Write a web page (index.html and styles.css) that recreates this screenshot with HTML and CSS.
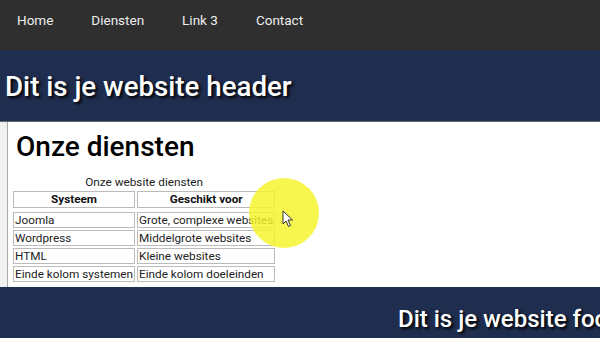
FILE: index.html
```html
<!DOCTYPE html>
<html lang="nl">
<head>
    <meta charset="UTF-8">
    <meta name="viewport" content="width=device-width, initial-scale=1.0">
    <title>Onze diensten</title>
    <link rel="stylesheet" href="styles.css">
</head>
<body>
    <nav class="topnav">
        <a href="#">Home</a>
        <a href="#">Diensten</a>
        <a href="#">Link 3</a>
        <a href="#">Contact</a>
    </nav>
    <header class="site-header">
        <h1>Dit is je website header</h1>
    </header>
    <div class="page">
        <aside class="sidebar"></aside>
        <main class="content">
            <h2>Onze diensten</h2>
            <table class="services">
                <caption>Onze website diensten</caption>
                <thead>
                    <tr><th>Systeem</th><th>Geschikt voor</th></tr>
                </thead>
                <tbody>
                    <tr><td>Joomla</td><td>Grote, complexe websites</td></tr>
                    <tr><td>Wordpress</td><td>Middelgrote websites</td></tr>
                    <tr><td>HTML</td><td>Kleine websites</td></tr>
                    <tr><td>Einde kolom systemen</td><td>Einde kolom doeleinden</td></tr>
                </tbody>
            </table>
        </main>
    </div>
    <footer class="site-footer">
        <p>Dit is je website footer</p>
    </footer>

    <!-- cursor highlight from the screen recording -->
    <div class="cursor-spot"></div>
    <svg class="cursor" width="12" height="18" viewBox="0 0 12 18">
        <path d="M1 1 L1 14 L4 11 L6.5 16.5 L8.5 15.5 L6 10 L10.5 10 Z" fill="#fff" stroke="#333" stroke-width="1"/>
    </svg>
</body>
</html>
```

FILE: styles.css
```css
body {
    margin: 0;
    font-family: Roboto, "Liberation Sans", Arial, sans-serif;
    background: #fff;
    overflow: hidden;
}
.topnav {
    display: flex;
    background-color: #2f2f2f;
    height: 50px;
    align-items: center;
    padding-left: 17px;
    padding-bottom: 10px;
    box-sizing: border-box;
}
.topnav a {
    color: #eee;
    text-decoration: none;
    font-size: 13.5px;
    margin-right: 38px;
}
.site-header {
    background-color: #1f2d4e;
    height: 71px;
    display: flex;
    align-items: center;
    border-bottom: 1px solid #666;
}
.site-header h1 {
    margin: 2px 0 0 5px;
    color: #fff;
    font-size: 27.7px;
    font-weight: 500;
    text-shadow: 2px 2px 3px #000;
}
.page {
    display: flex;
    height: 165px;
}
.sidebar {
    width: 7px;
    background: #f1f1f1;
    border-right: 1px solid #aaa;
}
.content {
    flex: 1;
    padding: 8px 0 0 3px;
}
.content h2 {
    margin: 0 0 12px 5px;
    font-size: 28px;
    font-weight: 500;
    color: #000;
}
.services {
    font-size: 11.75px;
    color: #222;
    border-spacing: 2px;
}
.services th,
.services td {
    border: 1px solid #bbb;
    padding: 0 1px;
    text-align: left;
    height: 14px;
}
.services th {
    text-align: center;
    font-weight: bold;
    color: #111;
    padding-bottom: 1px;
}
/* a little more room between the header row and the body */
.services tbody::before {
    content: "";
    display: table-row;
}
.site-footer {
    background-color: #1f2d4e;
    height: 51px;
    display: flex;
    align-items: center;
    padding-left: 398px;
    white-space: nowrap;
}
.site-footer p {
    margin: 12px 0 0 0;
    color: #fff;
    font-size: 24px;
    font-weight: 500;
    text-shadow: 2px 2px 3px #000;
}
.cursor-spot {
    position: absolute;
    left: 249px;
    top: 178px;
    width: 70px;
    height: 70px;
    border-radius: 50%;
    background: rgba(244, 244, 40, 0.82);
}
.cursor {
    position: absolute;
    left: 282px;
    top: 210px;
}
```
